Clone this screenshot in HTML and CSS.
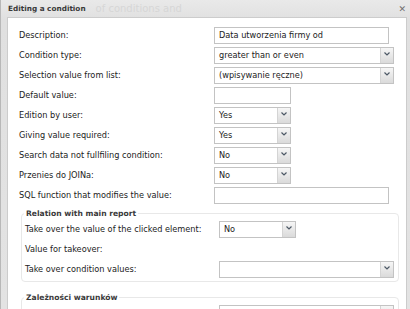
FILE: index.html
```html
<!DOCTYPE html>
<html lang="en">
<head>
    <meta charset="UTF-8">
    <title>Editing a condition</title>
    <link rel="stylesheet" href="styles.css">
</head>
<body>
<div class="dialog">
    <!-- Window title -->
    <div class="titlebar">
        <span class="title">Editing a condition</span>
        <span class="ghost">of conditions and</span>
        <span class="close">&#x2715;</span>
    </div>

    <div class="content">
        <!-- Main condition settings -->
        <div class="form-grid">
            <label>Description:</label>
            <div class="input wide-input">Data utworzenia firmy od</div>

            <label>Condition type:</label>
            <div class="select wide-select">
                <span class="value">greater than or even</span>
                <span class="arrow"><svg width="6" height="4" viewBox="0 0 6 4"><path d="M0.5 0.5 L3 3 L5.5 0.5" fill="none" stroke="#4d5966" stroke-width="1.2"/></svg></span>
            </div>

            <label>Selection value from list:</label>
            <div class="select wide-select">
                <span class="value">(wpisywanie ręczne)</span>
                <span class="arrow"><svg width="6" height="4" viewBox="0 0 6 4"><path d="M0.5 0.5 L3 3 L5.5 0.5" fill="none" stroke="#4d5966" stroke-width="1.2"/></svg></span>
            </div>

            <label>Default value:</label>
            <div class="input small"></div>

            <label>Edition by user:</label>
            <div class="select small">
                <span class="value">Yes</span>
                <span class="arrow"><svg width="6" height="4" viewBox="0 0 6 4"><path d="M0.5 0.5 L3 3 L5.5 0.5" fill="none" stroke="#4d5966" stroke-width="1.2"/></svg></span>
            </div>

            <label>Giving value required:</label>
            <div class="select small">
                <span class="value">Yes</span>
                <span class="arrow"><svg width="6" height="4" viewBox="0 0 6 4"><path d="M0.5 0.5 L3 3 L5.5 0.5" fill="none" stroke="#4d5966" stroke-width="1.2"/></svg></span>
            </div>

            <label>Search data not fullfiling condition:</label>
            <div class="select small">
                <span class="value">No</span>
                <span class="arrow"><svg width="6" height="4" viewBox="0 0 6 4"><path d="M0.5 0.5 L3 3 L5.5 0.5" fill="none" stroke="#4d5966" stroke-width="1.2"/></svg></span>
            </div>

            <label>Przenies do JOINa:</label>
            <div class="select small">
                <span class="value">No</span>
                <span class="arrow"><svg width="6" height="4" viewBox="0 0 6 4"><path d="M0.5 0.5 L3 3 L5.5 0.5" fill="none" stroke="#4d5966" stroke-width="1.2"/></svg></span>
            </div>

            <label>SQL function that modifies the value:</label>
            <div class="input wide-input"></div>
        </div>

        <!-- Relation with main report -->
        <fieldset class="group">
            <legend>Relation with main report</legend>
            <div class="form-grid sub">
                <label>Take over the value of the clicked element:</label>
                <div class="select small">
                    <span class="value">No</span>
                    <span class="arrow"><svg width="6" height="4" viewBox="0 0 6 4"><path d="M0.5 0.5 L3 3 L5.5 0.5" fill="none" stroke="#4d5966" stroke-width="1.2"/></svg></span>
                </div>

                <label>Value for takeover:</label>
                <div></div>

                <label>Take over condition values:</label>
                <div class="select wide-input">
                    <span class="value"></span>
                    <span class="arrow"><svg width="6" height="4" viewBox="0 0 6 4"><path d="M0.5 0.5 L3 3 L5.5 0.5" fill="none" stroke="#4d5966" stroke-width="1.2"/></svg></span>
                </div>
            </div>
        </fieldset>

        <!-- Condition dependencies -->
        <fieldset class="group second">
            <legend>Zależności warunków</legend>
            <div class="form-grid sub">
                <label></label>
                <div class="select wide-input">
                    <span class="value"></span>
                    <span class="arrow"><svg width="6" height="4" viewBox="0 0 6 4"><path d="M0.5 0.5 L3 3 L5.5 0.5" fill="none" stroke="#4d5966" stroke-width="1.2"/></svg></span>
                </div>
            </div>
        </fieldset>
    </div>
</div>
</body>
</html>
```

FILE: styles.css
```css
* {
    margin: 0;
    padding: 0;
    box-sizing: border-box;
}

body {
    font-family: "DejaVu Sans", sans-serif;
    font-size: 8.2px;
    color: #222222;
    background: #ffffff;
    overflow: hidden;
}

.dialog {
    width: 410px;
    height: 309px;
    display: flex;
    flex-direction: column;
    background: linear-gradient(#e9e9e9, #e0e0e0 20px, #e3e3e3);
    border-left: 1px solid #b8b8b8;
    padding: 0 3px 0 6px;
    overflow: hidden;
}

.titlebar {
    height: 17px;
    flex-shrink: 0;
    display: flex;
    align-items: center;
}

.title {
    margin-left: 1px;
    font-size: 7.3px;
    font-weight: bold;
    color: #3a3a3a;
}

.ghost {
    margin-left: 10px;
    font-size: 10px;
    color: #d6d6d6;
}

.close {
    margin-left: auto;
    margin-right: 1px;
    font-size: 9px;
    color: #707070;
}

.content {
    flex: 1;
    background: #ffffff;
    border: 1px solid #cccccc;
    border-bottom: none;
    padding: 7px 0 0 11px;
}

.form-grid {
    display: grid;
    grid-template-columns: 195px 1fr;
    grid-auto-rows: 20px;
    align-items: center;
}

.form-grid.sub {
    grid-template-columns: 194px 1fr;
}

.input,
.select {
    height: 17px;
    border: 1px solid #c3c3c3;
    background: #ffffff;
    line-height: 15px;
    white-space: nowrap;
    overflow: hidden;
}

.input {
    padding-left: 4px;
}

.select {
    display: flex;
    align-items: center;
}

.select .value {
    flex: 1;
    padding-left: 4px;
}

.select .arrow {
    width: 13px;
    height: 15px;
    display: flex;
    align-items: center;
    justify-content: center;
    padding-bottom: 3px;
    background: linear-gradient(#f6f6f6, #dadada);
    border-left: 1px solid #d4d4d4;
}

.wide-input {
    width: 175px;
}

.wide-select {
    width: 180px;
}

.small {
    width: 77px;
}

.group {
    margin: 3px 7px 0 2px;
    padding: 0 0 2px 3px;
    border: 1px solid #e8e8e8;
    border-radius: 4px;
}

.group.second {
    margin-top: 10px;
}

.group legend {
    margin-left: -1px;
    padding: 0 2px;
    line-height: 11px;
    font-size: 7.6px;
    font-weight: bold;
    color: #3a3a3a;
}
```
